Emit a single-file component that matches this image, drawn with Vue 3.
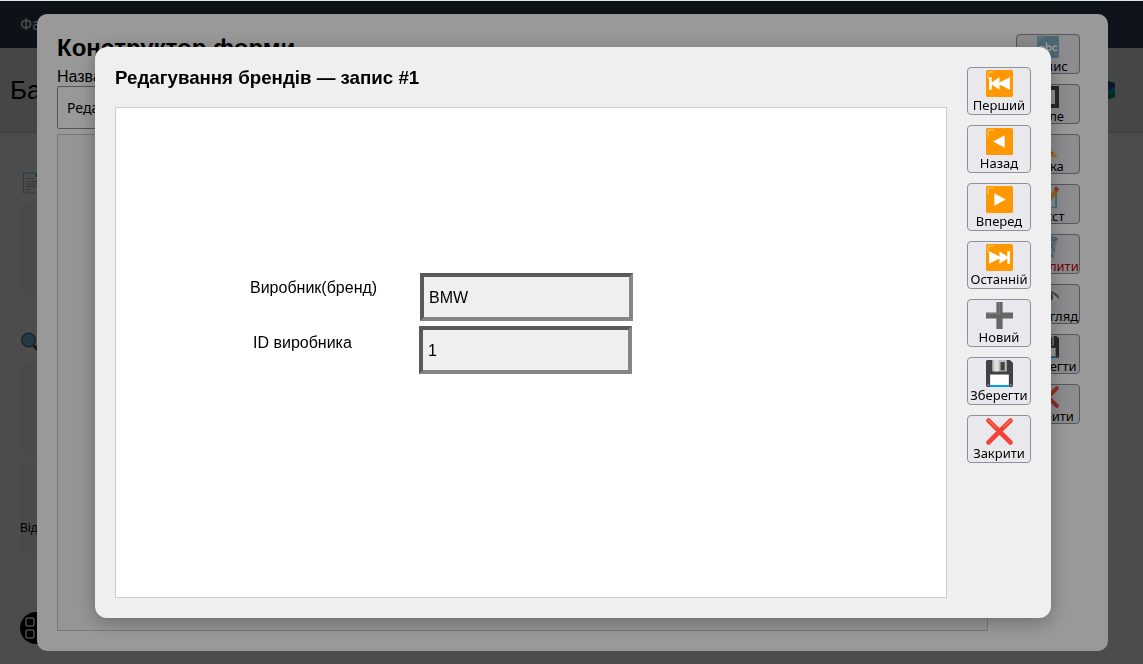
<script setup>
import { ref } from 'vue'

const fields = ref([
  { id: 'brand', label: 'Виробник(бренд)', value: 'BMW', lx: 134, ly: 171, x: 304, y: 165 },
  { id: 'brand-id', label: 'ID виробника', value: '1', lx: 137, ly: 226, x: 303, y: 218 },
])
const formName = ref('Редагування брендів')

const actions = [
  { icon: 'first', label: 'Перший' },
  { icon: 'prev', label: 'Назад' },
  { icon: 'next', label: 'Вперед' },
  { icon: 'last', label: 'Останній' },
  { icon: 'plus', label: 'Новий' },
  { icon: 'disk', label: 'Зберегти' },
  { icon: 'cross', label: 'Закрити' },
]
const tools = [
  { icon: 'abc', label: 'Напис' },
  { icon: 'frame', label: 'Поле' },
  { icon: 'ruler', label: 'Сітка' },
  { icon: 'memo', label: 'Текст' },
  { icon: 'bin', label: 'Видалити', danger: true },
  { icon: 'eye', label: 'Перегляд' },
  { icon: 'disk', label: 'Зберегти' },
  { icon: 'cross', label: 'Закрити' },
]
</script>

<template>
  <svg class="defs" aria-hidden="true">
    <symbol id="tile" viewBox="0 0 26 26">
      <rect width="26" height="26" rx="1.500" fill="#ff9800" />
      <path d="M2 8V4Q2 2 4 2H7" fill="none" stroke="#ffbd52" stroke-width="1.500" stroke-linecap="round" />
    </symbol>
    <symbol id="first" viewBox="0 0 26 26">
      <use href="#tile" />
      <path d="M3 7h2.500v5L13 7v5l10-5v12l-10-5v5l-7.500-5v5H3z" fill="#fff" />
    </symbol>
    <symbol id="last" viewBox="0 0 26 26">
      <use href="#tile" />
      <path d="M23 7h-2.500v5L13 7v5L3 7v12l10-5v5l7.500-5v5H23z" fill="#fff" />
    </symbol>
    <symbol id="prev" viewBox="0 0 26 26">
      <use href="#tile" />
      <path d="M18 7v12L7 13z" fill="#fff" />
    </symbol>
    <symbol id="next" viewBox="0 0 26 26">
      <use href="#tile" />
      <path d="M8 7v12l11-6z" fill="#fff" />
    </symbol>
    <symbol id="plus" viewBox="0 0 26 26">
      <path d="M10 0h6v10h10v6H16v10h-6V16H0v-6h10z" fill="#666" />
      <path d="M11 1h2v10H1" fill="none" stroke="#7b7b7b" />
    </symbol>
    <symbol id="disk" viewBox="0 0 26 26">
      <path d="M1 0h22l3 3v22l-1 1H1l-1-1V1z" fill="#424242" />
      <path d="M6 0h14v11H6z" fill="#bdbdbd" />
      <path d="M8 0h4v11H8z" fill="#e0e0e0" />
      <path d="M14 2h4v8h-4z" fill="#424242" />
      <path d="M4 14h18v12H4z" fill="#fff" />
      <path d="M4 24h18v2H4z" fill="#039be5" />
      <path d="M1 23h2v2H1zM23 23h2v2h-2z" fill="#777" />
    </symbol>
    <symbol id="cross" viewBox="0 0 26 26">
      <path d="M2.500 2.500l21 21M23.500 2.500l-21 21" stroke="#f44336" stroke-width="4.600" stroke-linecap="round" />
      <path d="M2 1.500l8 8M24 1.500l-7 7" stroke="#ff7555" stroke-width="1" stroke-linecap="round" />
    </symbol>
    <symbol id="abc" viewBox="0 0 22 22">
      <rect width="22" height="22" rx="1" fill="#82aec0" />
      <path d="M1.500 6V2.500Q1.500 1.500 3 1.500H6" fill="none" stroke="#b9d4e0" />
      <g fill="none" stroke="#fff" stroke-width="1.600">
        <circle cx="4.500" cy="12.500" r="2" /><path d="M7 10v5M9.500 6.500V15" />
        <circle cx="11.800" cy="12.300" r="2.200" /><path d="M20 10.800a2.300 2.300 0 1 0 0 3.200" />
      </g>
    </symbol>
    <symbol id="frame" viewBox="0 0 22 22">
      <rect x="2" y="2" width="18" height="18" fill="#eee" stroke="#424242" stroke-width="4" />
    </symbol>
    <symbol id="ruler" viewBox="0 0 22 22">
      <path d="M1 1v20h20z" fill="#fdc02f" />
      <path d="M5 11v6h6z" fill="#aaa" />
      <path d="M4 4l-2 2M8 8l-2 2M12 12l-2 2M16 16l-2 2" stroke="#795500" />
    </symbol>
    <symbol id="memo" viewBox="0 0 22 22">
      <path d="M1 2h18v20H1z" fill="#deebf2" />
      <path d="M19 6v16H3" stroke="#75b5d4" stroke-width="2" fill="none" />
      <path d="M4 10h8M4 14h7" stroke="#999" />
      <path d="M10 13L18 3l3 3-8 10-4 1z" fill="#f9a825" />
      <path d="M17 3l2-3 3 3-2 3z" fill="#ef5350" />
    </symbol>
    <symbol id="bin" viewBox="0 0 22 22">
      <path d="M2 3h18l-3 19H5z" fill="#b5cbd4" />
      <path d="M3 3h16M4 7l12 14M9 5l9 10M18 6L6 19M12 5L4 12" stroke="#66828e" fill="none" />
      <ellipse cx="11" cy="3" rx="9" ry="2" fill="none" stroke="#80a5b5" stroke-width="1.500" />
    </symbol>
    <symbol id="eye" viewBox="0 0 22 22">
      <path d="M0 12Q11 0 22 12Q11 21 0 12z" fill="#f5f5f5" />
      <path d="M0 11Q11-1 22 12" fill="none" stroke="#77716d" stroke-width="2" />
      <circle cx="11" cy="11" r="5" fill="#7b5545" /><circle cx="11" cy="11" r="2.500" fill="#222" />
    </symbol>
  </svg>

  <div class="page">
    <nav class="menu"><a href="#">Файл</a></nav>
    <header class="banner">
      <h1>База</h1>
      <svg class="books" width="28" height="24" viewBox="0 0 28 24">
        <path d="M2 8L18 2l10 3v5L12 17 2 13z" fill="#303f9f" />
        <path d="M2 12l10 5 16-8v6l-16 5-10-4z" fill="#00acc1" />
        <path d="M2 17l10 4 16-7v5l-16 5-10-3z" fill="#00897b" />
      </svg>
    </header>
    <main class="content">
      <svg class="mark" width="22" height="22" viewBox="0 0 22 22">
        <g opacity=".75">
          <path d="M3.500 1H17l4 4v16H3.500z" fill="#fff" fill-opacity=".1" stroke="#5faee0" />
          <path d="M15.500 1v4H20z" fill="#0288d1" />
          <path d="M6 6.500h8M6 9.500h12M6 12h12M6 14.500h12M6 17.500h5" stroke="#90a4ae" />
        </g>
      </svg>
      <div class="card"></div>
      <svg class="mark search" width="22" height="22" viewBox="0 0 22 22">
        <path d="M13.500 13.500l6 6" stroke="#555" stroke-width="3" stroke-linecap="round" />
        <circle cx="8.500" cy="8" r="6.800" fill="#81c4e8" stroke="#66757d" stroke-width="1.500" />
      </svg>
      <div class="card"></div>
      <div class="card last">Відкрити</div>
      <svg class="round" width="32" height="32" viewBox="0 0 32 32">
        <circle cx="16" cy="16" r="16" fill="#000" />
        <g fill="none" stroke="#fff" stroke-width="1.500">
          <rect x="6" y="6" width="8" height="8" rx="2" /><rect x="18" y="6" width="8" height="8" rx="2" />
          <rect x="6" y="18" width="8" height="8" rx="2" /><rect x="18" y="18" width="8" height="8" rx="2" />
        </g>
      </svg>
    </main>
  </div>

  <div class="overlay designer-layer">
    <section class="dialog designer">
      <div class="body">
        <h2>Конструктор форми</h2>
        <label for="form-name">Назва</label>
        <input id="form-name" v-model="formName" class="name" type="text" />
        <div class="sheet"></div>
      </div>
      <div class="tools">
        <button v-for="t in tools" :key="t.label" type="button" :class="{ danger: t.danger }">
          <svg width="22" height="22"><use :href="'#' + t.icon" /></svg>
          <span>{{ t.label }}</span>
        </button>
      </div>
    </section>
  </div>

  <div class="overlay editor-layer">
    <section class="dialog editor" role="dialog" aria-labelledby="editor-title">
      <div class="body">
        <h3 id="editor-title">Редагування брендів — запис #1</h3>
        <div class="canvas">
          <template v-for="f in fields" :key="f.id">
            <label :for="f.id" :style="{ left: f.lx + 'px', top: f.ly + 'px' }">{{ f.label }}</label>
            <input :id="f.id" v-model="f.value" type="text" :style="{ left: f.x + 'px', top: f.y + 'px' }" />
          </template>
        </div>
      </div>
      <div class="actions">
        <button v-for="a in actions" :key="a.label" type="button">
          <svg width="27" height="27"><use :href="'#' + a.icon" /></svg>
          <span>{{ a.label }}</span>
        </button>
      </div>
    </section>
  </div>
</template>

<style>
body {
  margin: 0;
  overflow: hidden;
  font-family: "Liberation Sans", Arial, sans-serif;
  color: #000;
}
</style>

<style scoped>
* { box-sizing: border-box; }
.defs { position: absolute; width: 0; height: 0; }
.page {
  min-height: 100vh;
  background: #fff;
  border-top: 1px solid #dfe6e2;
}
.menu {
  display: flex;
  align-items: center;
  height: 47px;
  padding: 0 20px;
  background: linear-gradient(90deg, #2c3e50, #303c58);
}
.menu a { color: #fff; font-size: 16px; text-decoration: none; }
.banner {
  display: flex;
  align-items: center;
  justify-content: space-between;
  height: 85px;
  padding: 0 28px 0 10px;
  background: #e8eeec;
  border-bottom: 1px solid #c8d4d0;
}
h1 { margin: 0; font-size: 26px; line-height: 30px; font-weight: 400; }
.content { display: flex; flex-direction: column; padding: 39px 40px 0 20px; }
.mark { flex: none; margin-bottom: 10px; }
.search { margin-top: 28px; }
.card { height: 90px; background: #f8f8f8; margin-bottom: 10px; font-size: 12px; }
.card.last { padding-top: 57px; }
.round { margin-top: 48px; }

.overlay { position: fixed; inset: 1px 0 0; display: flex; }
.designer-layer { padding: 13px 35px 13px 37px; background: rgba(0, 0, 0, .5); }
.editor-layer { padding: 46px 92px 46px 95px; background: rgba(0, 0, 0, .4); }
.dialog { display: flex; flex: 1; min-width: 0; border-radius: 12px; }
.body { display: flex; flex: 1; flex-direction: column; min-width: 0; }
.designer { gap: 28px; padding: 20px 28px 20px 20px; border-radius: 10px; background: #fff; }
.editor {
  gap: 20px;
  padding: 20px;
  background: #efefef;
  box-shadow: 0 4px 20px rgba(0, 0, 0, .3);
}
h2 { margin: 0; font-size: 24px; line-height: 28px; }
.designer label { margin-top: 6px; font-size: 16px; line-height: 18px; }
.name {
  width: 100%;
  height: 43px;
  margin: 0 0 5px;
  padding: 0 9px;
  border: 1px solid #8f8f9d;
  border-radius: 2px;
  background: #fff;
  font: 14px "Noto Sans", sans-serif;
}
.sheet { flex: 1; border: 1px solid #ccc; background: #f9f9f9; }
h3 { margin: 0 0 19px; line-height: 21px; }
.canvas { position: relative; flex: 1; border: 1px solid #ccc; background: #fff; }
.canvas label { position: absolute; font-size: 16px; line-height: 18px; white-space: nowrap; }
.canvas input {
  position: absolute;
  width: 213px;
  height: 48px;
  padding: 2px 5px 0;
  border: 4px solid;
  border-color: #5a5a5a #858585 #858585 #5a5a5a;
  background: #efefef;
  font: 16px "Liberation Sans", Arial, sans-serif;
}
.tools, .actions { display: flex; flex-direction: column; gap: 10px; width: 64px; }
button {
  display: flex;
  flex-direction: column;
  align-items: center;
  height: 48px;
  padding: 2px 0 0;
  border: 1px solid #8f8f9d;
  border-radius: 4px;
  background: #e9e9ed;
  color: #000;
  font: 13px/16px "Noto Sans", sans-serif;
}
button svg { display: block; flex: none; }
button span { white-space: nowrap; }
.tools button { height: 40px; padding-top: 1px; }
.tools button.danger { color: #c00000; }
</style>
